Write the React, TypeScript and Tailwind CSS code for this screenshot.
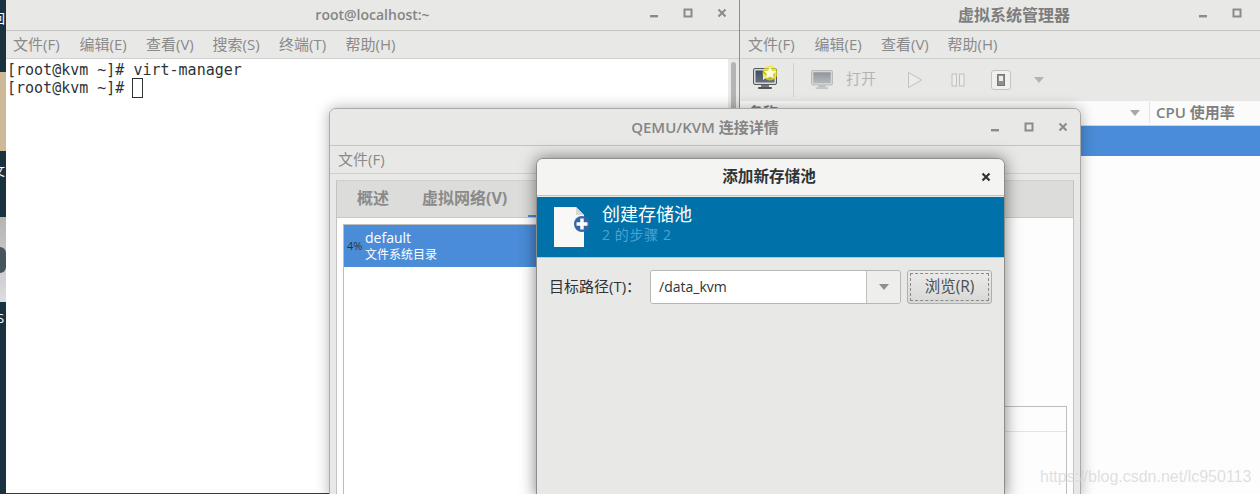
import type { ReactNode } from 'react';

const termMenu = ['文件(F)', '编辑(E)', '查看(V)', '搜索(S)', '终端(T)', '帮助(H)'];
const virtMenu = ['文件(F)', '编辑(E)', '查看(V)', '帮助(H)'];

function WinControls({ gap }: { gap: string }) {
  return (
    <div className={`flex items-center ${gap}`}>
      <svg width="10" height="10" viewBox="0 0 10 10">
        <rect x="1" y="7" width="8" height="2.4" fill="#8b8b8b" />
      </svg>
      <svg width="10" height="10" viewBox="0 0 10 10">
        <rect x="1.5" y="1.5" width="7" height="7" fill="none" stroke="#8b8b8b" strokeWidth="2" />
      </svg>
      <svg width="10" height="10" viewBox="0 0 10 10">
        <path d="M1.5 1.5l7 7M8.5 1.5l-7 7" stroke="#8b8b8b" strokeWidth="2" />
      </svg>
    </div>
  );
}

function CaretDown({ color = '#8f8f8f' }: { color?: string }) {
  return (
    <svg width="10" height="6" viewBox="0 0 10 6">
      <path d="M0 0h10L5 6z" fill={color} />
    </svg>
  );
}

function Monitor({ dim }: { dim?: boolean }) {
  return (
    <svg width={dim ? 22 : 24} height={dim ? 20 : 22} viewBox="0 0 24 22">
      <defs>
        <linearGradient id={dim ? 'scrA' : 'scrB'} x1="0" y1="0" x2="0" y2="1">
          <stop offset="0" stopColor={dim ? '#8e959c' : '#3c4a66'} />
          <stop offset="1" stopColor={dim ? '#b4b9bd' : '#66707c'} />
        </linearGradient>
      </defs>
      <rect x="0.5" y="0.5" width="23" height="16" rx="1.5" fill={dim ? '#d6d7d6' : '#d8d9d8'} stroke={dim ? '#b5b6b5' : '#555a5e'} />
      <rect x="2.5" y="2.5" width="19" height="12" fill={`url(#${dim ? 'scrA' : 'scrB'})`} />
      <rect x="8" y="17" width="8" height="2" fill={dim ? '#b8b9b8' : '#777'} />
      <rect x="5" y="19" width="14" height="2" rx="1" fill={dim ? '#c2c3c2' : '#555'} />
      {!dim && <path d="M10 5l5 3.5-5 3.5z" fill="#e8e8e8" />}
    </svg>
  );
}

function NewConnIcon() {
  return (
    <div className="relative h-[24px] w-[24px]">
      <Monitor />
      <svg className="absolute left-[9px] top-[-3px]" width="16" height="16" viewBox="0 0 16 16">
        <circle cx="8" cy="8" r="7.5" fill="#f4f000" fillOpacity="0.65" />
        <path d="M8 1.8l1.9 3.9 4.3.6-3.1 3 .7 4.3L8 11.6l-3.8 2 .7-4.3-3.1-3 4.3-.6z" fill="#fffde0" />
      </svg>
    </div>
  );
}

function FileAddIcon() {
  return (
    <svg width="38" height="42" viewBox="0 0 38 42">
      <path d="M1 1h22l8 8v32H1z" fill="#f8f8f6" />
      <path d="M23 1v8h8z" fill="#d8d8d6" />
      <circle cx="29" cy="18" r="8" fill="#3465a4" />
      <path d="M29 12.5v11M23.5 18h11" stroke="#fff" strokeWidth="3.4" />
    </svg>
  );
}

function TitleBar({ h, children, bg = 'bg-[#e8e8e7]' }: { h: string; children: ReactNode; bg?: string }) {
  return (
    <div className={`relative flex shrink-0 items-center justify-center border-b border-[#c3c3c0] ${h} ${bg}`}>
      {children}
    </div>
  );
}

function TerminalWindow() {
  return (
    <section className="absolute left-[6px] top-[-1px] flex h-[495px] w-[734px] flex-col overflow-hidden border-b border-[#33393d] border-r border-r-[#8c8c8a] bg-white">
      <TitleBar h="h-[32px]">
        <span className="text-[14px] font-semibold text-[#858585]">root@localhost:~</span>
        <div className="absolute right-[12px] top-[9px]">
          <WinControls gap="gap-[24px]" />
        </div>
      </TitleBar>
      <nav className="flex h-[28px] shrink-0 items-center gap-[16px] border-b border-[#d0d0ce] bg-[#e8e8e7] pl-[7px] text-[15px] text-[#8a8a8a]">
        {termMenu.map((m) => (
          <span key={m} className="w-[50.5px] whitespace-nowrap">{m}</span>
        ))}
      </nav>
      <div className="flex flex-1">
        <pre className="flex-1 pl-[1px] pt-[2px] font-['DejaVu_Sans_Mono'] text-[15px] leading-[18px] text-[#2e3436]">
          <div>[root@kvm ~]# virt-manager</div>
          <div className="flex">
            <span>[root@kvm ~]# </span>
            <span className="-ml-px -mt-[1px] h-[20px] w-[11px] border border-[#2e3436]" />
          </div>
        </pre>
        <div className="w-[11px] bg-[#e9e9e8] px-[3px] pt-[3px]">
          <div className="h-[60px] rounded-full bg-[#b4b4b3]" />
        </div>
      </div>
    </section>
  );
}

function VirtManagerWindow() {
  return (
    <section className="absolute left-[740px] top-[-1px] flex h-[496px] w-[548px] flex-col overflow-hidden bg-white">
      <TitleBar h="h-[32px]">
        <span className="text-[16px] font-bold text-[#7d7d7d]">虚拟系统管理器</span>
        <div className="absolute right-[12px] top-[9px]">
          <WinControls gap="gap-[24px]" />
        </div>
      </TitleBar>
      <nav className="flex h-[28px] shrink-0 items-center gap-[16px] border-b border-[#d0d0ce] bg-[#e8e8e7] pl-[8px] text-[15px] text-[#8a8a8a]">
        {virtMenu.map((m) => (
          <span key={m} className="w-[50.5px] whitespace-nowrap">{m}</span>
        ))}
      </nav>
      <div className="flex h-[42px] shrink-0 items-center bg-[#e8e8e7] pb-[1px] pl-[13px]">
        <NewConnIcon />
        <div className="ml-[16px] h-[34px] w-px bg-[#d2d2d0]" />
        <div className="ml-[17px] flex"><Monitor dim /></div>
        <span className="mb-[2px] ml-[13px] text-[15px] text-[#b4b4b3]">打开</span>
        <svg className="ml-[31px]" width="16" height="18" viewBox="0 0 16 18">
          <path d="M1.5 1.5l13 7.5-13 7.5z" fill="#ececeb" stroke="#c2c2c0" />
        </svg>
        <svg className="ml-[28px]" width="14" height="14" viewBox="0 0 14 14">
          <rect x="1" y="1" width="4.5" height="12" fill="#ececeb" stroke="#c0c0be" />
          <rect x="8.5" y="1" width="4.5" height="12" fill="#ececeb" stroke="#c0c0be" />
        </svg>
        <div className="ml-[26px] flex h-[20px] w-[20px] items-center justify-center rounded-[3px] border border-[#c4c4c2] bg-[#f0f0ef]">
          <svg width="8" height="12" viewBox="0 0 8 12">
            <rect x="0.5" y="0.5" width="7" height="11" fill="#8f8f8f" stroke="#777" />
            <rect x="2" y="2" width="4" height="5" fill="#eee" />
          </svg>
        </div>
        <div className="ml-[23px] flex"><CaretDown color="#b4b4b3" /></div>
      </div>
      <div className="flex h-[25px] shrink-0 items-center border-b border-[#d5d5d3] border-t border-t-[#fafafa] bg-[#fbfbfb] pb-[2px] text-[15px] font-semibold text-[#7f7f7f]">
        <span className="ml-[8px]">名称</span>
        <div className="ml-[352px] flex"><CaretDown color="#a8a8a8" /></div>
        <div className="ml-[9px] h-full w-px bg-[#e2e2e0]" />
        <span className="ml-[6px]">CPU 使用率</span>
      </div>
      <div className="h-[30px] shrink-0 bg-[#4a8cd8]" />
      <div className="flex-1 bg-[#fdfdfd]" />
    </section>
  );
}

function ConnectionWindow() {
  return (
    <section className="absolute left-[329px] top-[108px] flex h-[390px] w-[752px] flex-col overflow-hidden rounded-t-[7px] border border-[#a9a9a7] bg-[#e8e8e7] shadow-[0_0_14px_rgba(0,0,0,0.3)]">
      <TitleBar h="h-[37px]">
        <span className="text-[15px] font-semibold text-[#858585]">QEMU/KVM 连接详情</span>
        <div className="absolute right-[12px] top-[13px]">
          <WinControls gap="gap-[24px]" />
        </div>
      </TitleBar>
      <nav className="flex h-[28px] shrink-0 items-center border-b border-[#d0d0ce] pl-[8px] text-[15px] text-[#8a8a8a]">
        <span>文件(F)</span>
      </nav>
      <div className="flex flex-1 flex-col px-[6px] pt-[6px]">
        <div className="flex flex-1 flex-col border border-[#c4c4c2] border-t-[#d0d0ce]">
          <div className="flex h-[37px] shrink-0 items-center border-b border-[#c8c8c6] bg-[#dcdcda] pl-[20px] text-[16px] font-bold text-[#8a8a8a]">
            <div className="flex gap-[33px] pb-[2px]">
              <span>概述</span>
              <span className="whitespace-nowrap">虚拟网络(V)</span>
            </div>
            <span className="ml-[21px] h-[2px] w-[20px] self-end bg-[#4a8cd8]" />
          </div>
          <div className="flex flex-1 gap-[4px] bg-[#fdfdfd] px-[6px] pt-[6px]">
            <div className="w-[340px] border border-[#bdbdbb] bg-white">
              <div className="flex h-[42px] items-center bg-[#4a8cd8] pl-[3px]">
                <span className="mt-[1px] w-[18px] text-[11px] text-[#2e3436]">4%</span>
                <div className="flex flex-col">
                  <span className="text-[14px] leading-[18px] text-white">default</span>
                  <span className="text-[12px] leading-[16px] text-white">文件系统目录</span>
                </div>
              </div>
            </div>
            <div className="flex flex-1 flex-col justify-end">
              <div className="h-[90px] border border-b-0 border-[#bdbdbb]">
                <div className="h-[25px] border-b border-[#e4e4e2]" />
              </div>
            </div>
          </div>
        </div>
      </div>
    </section>
  );
}

function StoragePoolDialog() {
  return (
    <section className="absolute left-[536px] top-[158px] flex h-[340px] w-[469px] flex-col overflow-hidden rounded-t-[7px] border border-[#8e8e8c] bg-[#e8e8e7] shadow-[0_0_16px_rgba(0,0,0,0.5)]">
      <TitleBar h="h-[37px]" bg="bg-[#f4f4f3]">
        <span className="mr-[3px] text-[15.6px] font-bold text-[#2e3436]">添加新存储池</span>
        <svg className="absolute right-[13px] top-[13px]" width="10" height="10" viewBox="0 0 10 10">
          <path d="M1.5 1.5l7 7M8.5 1.5l-7 7" stroke="#2e3436" strokeWidth="2.2" />
        </svg>
      </TitleBar>
      <div className="mt-px flex h-[61px] shrink-0 items-center border-b border-[#c4c4c2] bg-[#0072a9] pl-[16px]">
        <FileAddIcon />
        <div className="ml-[11px] flex flex-col pb-[8px]">
          <span className="text-[18px] leading-[24px] text-white">创建存储池</span>
          <span className="text-[14px] leading-[18px] tracking-[0.6px] text-[#4ba3d3]">2 的步骤 2</span>
        </div>
      </div>
      <div className="flex items-center pl-[12px] pt-[12px]">
        <span className="mb-[2px] w-[101px] whitespace-nowrap text-[15px] text-[#2e3436]">目标路径(T)：</span>
        <div className="flex h-[34px] w-[251px] overflow-hidden rounded-[3px] border border-[#b6b6b4]">
          <div className="flex flex-1 items-center bg-white pb-[2px] pl-[8px] text-[14px] text-[#2e3436]">/data_kvm</div>
          <div className="flex w-[34px] items-center justify-center border-l border-[#c0c0be] bg-[#eeeeed]">
            <CaretDown />
          </div>
        </div>
        <button className="ml-[6px] flex h-[34px] w-[85px] items-center justify-center rounded-[3px] border border-[#b0b0ae] bg-gradient-to-b from-[#ebebea] to-[#d8d8d6] p-[2px] text-[15.5px] text-[#4a4f52]">
          <span className="flex h-full w-full items-center justify-center border border-dashed border-[#8a8a88]">浏览(R)</span>
        </button>
      </div>
    </section>
  );
}

function DesktopStrip() {
  return (
    <div className="absolute left-0 top-0 h-full w-[6px] overflow-hidden text-[13px] text-white">
      <span className="absolute left-[-8px] top-[9px]">回</span>
      <div className="absolute left-0 top-[72px] h-[79px] w-full bg-[#cdb898]" />
      <span className="absolute left-[-8px] top-[161px]">文</span>
      <div className="absolute left-0 top-[217px] h-[85px] w-full bg-gradient-to-b from-[#b4b4b2] to-[#dcdce2]" />
      <div className="absolute left-0 top-[247px] h-[26px] w-full rounded-r-full bg-[#47555c]" />
      <span className="absolute left-[-3px] top-[309px]">S</span>
    </div>
  );
}

export default function App() {
  return (
    <div className="relative h-[494px] w-[1260px] overflow-hidden bg-[#1a3240] [font-family:'Open_Sans','Noto_Sans_CJK_SC',sans-serif]">
      <DesktopStrip />
      <TerminalWindow />
      <VirtManagerWindow />
      <ConnectionWindow />
      <StoragePoolDialog />
      <span className="absolute left-[1040px] top-[465px] whitespace-nowrap font-['Liberation_Sans'] text-[16px] text-[#d2d2d2]/70">
        https://blog.csdn.net/lc950113
      </span>
    </div>
  );
}
